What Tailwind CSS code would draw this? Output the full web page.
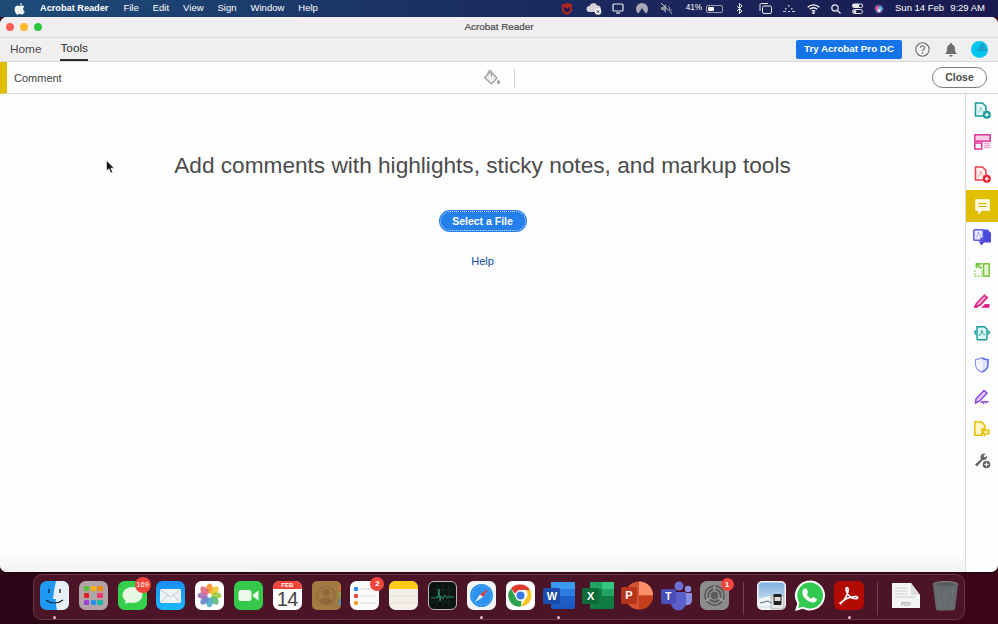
<!DOCTYPE html>
<html lang="en">
<head>
  <meta charset="UTF-8" />
  <title>Acrobat Reader</title>
  <script src="https://cdn.jsdelivr.net/npm/@tailwindcss/browser@4"></script>
</head>
<body class="w-[998px] h-[624px] overflow-hidden bg-gradient-to-r from-[#2c0616] via-[#3f0a1e] to-[#3c0618] font-['Liberation_Sans',sans-serif] flex flex-col">

  <!-- menu bar -->
  <div class="h-[17px] shrink-0 flex items-center text-white text-[9.500px] bg-gradient-to-r from-[#1d4c79] via-[#1a2c62] to-[#1a1a50]">
    <svg class="ml-[14px] w-[11px] h-[12px]" viewBox="0 0 14 16" fill="#f2f2f2"><path d="M10.2 0c.1 1.2-1.100 3-2.900 3C7.200 1.700 8.500.2 10.200 0zM7.300 4c.8 0 1.700-.8 3.100-.8 1.200 0 2.400.6 3.100 1.700-2.500 1.500-2.100 5 .5 6.100-.6 1.700-2.100 4.500-3.600 4.500-1 0-1.500-.7-2.800-.7s-1.900.7-2.900.7C2.700 15.500.5 11.800.5 8.500c0-3.200 2-5.200 4-5.200 1.200 0 2.100.7 2.800.7z"/></svg>
    <span class="ml-[15px] font-bold text-[9.200px]">Acrobat Reader</span>
    <span class="ml-[15px]">File</span>
    <span class="ml-[14px]">Edit</span>
    <span class="ml-[14px]">View</span>
    <span class="ml-[14px]">Sign</span>
    <span class="ml-[14px]">Window</span>
    <span class="ml-[14px]">Help</span>
    <div class="ml-auto flex items-center">
      <svg class="w-[12px] h-[12px]" viewBox="0 0 12 12"><path d="M1 1.500 6 0l5 1.500V7c0 2-3 4-5 5-2-1-5-3-5-5z" fill="#b3261e"/><path d="M3 3.500v4l3 2 3-2v-4L6 6z" fill="#1a1a50"/></svg>
      <svg class="ml-[13px] w-[16px] h-[13px]" viewBox="0 0 16 13"><path d="M3.500 10a3 3 0 0 1 0-6 4 4 0 0 1 7.500-.5A3 3 0 0 1 12 10z" fill="#d5d5d8"/><circle cx="12" cy="9.500" r="3.200" fill="#fff"/><path d="M10.800 8.300l2.400 2.400m0-2.400l-2.400 2.400" stroke="#1a1a50"/></svg>
      <svg class="ml-[10px] w-[12px] h-[11px]" viewBox="0 0 12 11" fill="none" stroke="#e8e8ea" stroke-width="1.200"><rect x="1" y="1" width="10" height="7" rx="1"/><path d="M4 10h4"/></svg>
      <svg class="ml-[12px] w-[12px] h-[11px]" viewBox="0 0 12 11" fill="#a9a9b5"><path d="M6 0a6 6 0 0 1 6 6c0 2-.8 3.500-2 4.500L8.500 9 6 5 3.500 9 2 10.500A6 6 0 0 1 0 6a6 6 0 0 1 6-6z"/></svg>
      <svg class="ml-[12px] w-[13px] h-[11px]" viewBox="0 0 13 11" fill="#8d8d9b"><path d="M1 4h2l3-3v9L3 7H1z"/><path d="M1 0l11 10.500" stroke="#c5c5cc"/><path d="M8 3l2 2-1 1 3 1" stroke="#8d8d9b" fill="none"/></svg>
      <span class="ml-[13px] text-[8.200px]">41%</span>
      <div class="ml-[4px] w-[17px] h-[8px] rounded-[2px] border border-[#a0a0aa] p-[1px]"><div class="w-[6px] h-full bg-white rounded-[1px]"></div></div>
      <svg class="ml-[13px] w-[7px] h-[11px]" viewBox="0 0 7 11" fill="none" stroke="#eee"><path d="M1 3l5 5-2.500 2.500V.500L6 3 1 8"/></svg>
      <svg class="ml-[16px] w-[13px] h-[11px]" viewBox="0 0 13 11" fill="none" stroke="#e8e8ea"><rect x="3.500" y="3" width="9" height="7.500" rx="1.500"/><path d="M1 8V2a1.500 1.500 0 0 1 1.500-1.500H9"/></svg>
      <svg class="ml-[11px] w-[12px] h-[8px]" viewBox="0 0 12 8" fill="#c8c8d0"><rect x="5" y="0" width="1.500" height="1.500"/><rect x="2" y="3" width="1.500" height="1.500"/><rect x="8" y="3" width="1.500" height="1.500"/><rect x="0" y="6" width="3" height="1"/><rect x="5" y="6" width="2" height="1"/><rect x="9" y="6" width="3" height="1"/></svg>
      <svg class="ml-[12px] w-[13px] h-[10px]" viewBox="0 0 13 10" fill="none" stroke="#fff" stroke-width="1.300"><path d="M.700 3.200a8.200 8.200 0 0 1 11.600 0M2.800 5.300a5.200 5.200 0 0 1 7.400 0M4.800 7.300a2.300 2.300 0 0 1 3.400 0"/><circle cx="6.500" cy="9" r=".5" fill="#fff"/></svg>
      <svg class="ml-[11px] w-[10px] h-[10px]" viewBox="0 0 10 10" fill="none" stroke="#eee" stroke-width="1.200"><circle cx="4" cy="4" r="3.200"/><path d="M6.500 6.500 9.500 9.500"/></svg>
      <svg class="ml-[11px] w-[11px] h-[11px]" viewBox="0 0 11 11"><rect x="0" y="0.500" width="11" height="4.500" rx="2.200" fill="#e8e8ea"/><circle cx="8.500" cy="2.700" r="1.500" fill="#1a1a50"/><rect x="0.500" y="6.500" width="10" height="4" rx="2" fill="none" stroke="#e8e8ea"/><circle cx="2.800" cy="8.500" r="1.500" fill="#e8e8ea"/></svg>
      <svg class="ml-[11px] w-[10px] h-[10px]" viewBox="0 0 10 10"><circle cx="5" cy="5" r="4.500" fill="#5a4a9a"/><circle cx="3.500" cy="4" r="2.200" fill="#e05a9a"/><circle cx="6.500" cy="4.500" r="2" fill="#58c0e8"/><circle cx="5" cy="6.500" r="1.800" fill="#e8e8f0"/></svg>
      <span class="ml-[11px]">Sun 14 Feb</span>
      <span class="ml-[6px] mr-[13px]">9:29 AM</span>
    </div>
  </div>

  <!-- window -->
  <div class="h-[555px] shrink-0 rounded-[7px] overflow-hidden flex flex-col bg-[#fdfdfd] shadow-[0_1px_3px_rgba(0,0,0,0.4)]">
    <div class="h-[21px] shrink-0 relative flex items-center bg-[#f0eef0] border-b border-[#dcdcdc]">
      <div class="ml-[5.500px] flex gap-[5.500px]">
        <div class="w-[8.500px] h-[8.500px] rounded-full bg-[#fc5f57]"></div>
        <div class="w-[8.500px] h-[8.500px] rounded-full bg-[#fdbb2d]"></div>
        <div class="w-[8.500px] h-[8.500px] rounded-full bg-[#2ac840]"></div>
      </div>
      <div class="absolute inset-0 flex items-center justify-center text-[9.900px] text-[#4a4a4a] [-webkit-text-stroke:0.2px_#4a4a4a]">Acrobat Reader</div>
    </div>

    <!-- tabs -->
    <div class="h-[24px] shrink-0 flex items-center bg-[#efefef] border-b border-[#d8d8d8] text-[11.800px] text-[#4b4b4b]">
      <span class="ml-[10px]">Home</span>
      <div class="ml-[19px] h-full flex items-center border-b-2 border-[#2c2c2c] text-[#2c2c2c]">Tools</div>
      <div class="ml-auto w-[106px] h-[19px] rounded-[2px] bg-[#1473e6] text-white text-[9.800px] font-bold flex items-center justify-center">Try Acrobat Pro DC</div>
      <svg class="ml-[13px] w-[15px] h-[15px]" viewBox="0 0 15 15" fill="none"><circle cx="7.500" cy="7.500" r="6.700" stroke="#6e6e6e" stroke-width="1.100"/><path d="M5.500 5.800a2 2 0 1 1 3 1.700c-.7.400-1 .8-1 1.500" stroke="#6e6e6e" stroke-width="1.200"/><circle cx="7.500" cy="11" r=".8" fill="#6e6e6e"/></svg>
      <svg class="ml-[15px] w-[12px] h-[14px]" viewBox="0 0 12 14" fill="#6e6e6e"><path d="M6 0c.6 0 1 .4 1 1v.6c2 .5 3 2.200 3 4.400 0 2.500.6 3.700 2 5H0c1.400-1.300 2-2.500 2-5 0-2.200 1-3.900 3-4.400V1c0-.6.4-1 1-1z"/><path d="M4.300 12h3.400a1.700 1.700 0 0 1-3.400 0z"/></svg>
      <svg class="ml-[14px] mr-[10px] w-[17px] h-[17px]" viewBox="0 0 17 17"><circle cx="8.500" cy="8.500" r="8.500" fill="#00c5ee"/><path d="M11.500 1 16.500 10H5z" fill="#18a3cc"/></svg>
    </div>

    <!-- comment bar -->
    <div class="h-[32px] shrink-0 flex items-center bg-[#fdfdfd] border-b border-[#d8d8d8] border-l-[7px] border-l-[#e0bf00]">
      <span class="ml-[7px] mt-[1px] text-[11px] text-[#444]">Comment</span>
      <svg class="ml-[421px] w-[18px] h-[17px]" viewBox="0 0 18 17" fill="none"><path d="M7.500 2.500 14 9l-5.500 6L1.500 8.500z" fill="#eeeeee" stroke="#9a9a9a" stroke-width="1.200"/><path d="M5 6V3a1.700 1.700 0 0 1 3.400 0v4.500" stroke="#9a9a9a"/><path d="M15.500 10.500c1 1.400 1.500 2.100 1.500 2.900a1.500 1.500 0 0 1-3 0c0-.8.500-1.500 1.500-2.900z" fill="#9a9a9a"/></svg>
      <div class="ml-[13px] w-px h-[20px] bg-[#d5d5d5]"></div>
      <div class="ml-auto mr-[11px] w-[55px] h-[21px] rounded-full border border-[#7a7a7a] text-[10.500px] font-bold text-[#4b4b4b] flex items-center justify-center">Close</div>
    </div>

    <!-- content -->
    <div class="flex-1 flex min-h-0">
      <div class="flex-1 relative flex flex-col items-center bg-gradient-to-b from-[#fdfdfd] from-[96%] to-[#f3f3f3]">
        <h1 class="mt-[57px] text-[22.650px] leading-[28px] text-[#4b4b4b]">Add comments with highlights, sticky notes, and markup tools</h1>
        <div class="mt-[31px] w-[88px] h-[22px] rounded-full bg-[#2680eb] p-[1px]">
          <div class="w-full h-full pt-[1px] rounded-full border border-dotted border-white/80 text-white text-[10.500px] font-bold flex items-center justify-center">Select a File</div>
        </div>
        <a class="mt-[22px] text-[11px] leading-[14px] text-[#0d4f9e]">Help</a>
        <!-- mouse pointer -->
        <svg class="absolute left-[106px] top-[66px] w-[9px] h-[14px]" viewBox="0 0 9 14"><path d="M.500.500v10.500l2.500-2.300 1.800 4.300 1.800-.8L4.800 8.200H8z" fill="#111" stroke="#fff" stroke-width=".6"/></svg>
      </div>

      <!-- tool rail -->
      <div class="w-[33px] shrink-0 border-l border-[#dcdcdc] flex flex-col">
        <div class="h-[32px] flex items-center justify-center">
          <svg class="w-[17px] h-[17px]" viewBox="0 0 17 17" fill="none"><path d="M1.500 1h7l3.500 3.500V14H1.500z" stroke="#1a9a9a" stroke-width="1.500" fill="#e4f6f6"/><path d="M4 10.500c2-1 2.800-3.500 2.800-5.500 0 2.500 1 3.700 3 4.500" stroke="#7cc"/><circle cx="12.800" cy="12.800" r="4" fill="#1a9a9a"/><path d="M10.800 12.800h4m-2-2v4" stroke="#fff" stroke-width="1.200"/></svg>
        </div>
        <div class="h-[32px] flex items-center justify-center">
          <svg class="w-[17px] h-[16px]" viewBox="0 0 17 16" fill="none"><rect x=".8" y=".8" width="15.400" height="6.300" stroke="#e0329a" stroke-width="1.500" fill="#fbd0e6"/><rect x=".8" y="9" width="7" height="6" stroke="#e0329a" stroke-width="1.500"/><path d="M10 9.500h6.500M10 11.500h6.500M10 13.500h6.500" stroke="#f4a8d0" stroke-width="1.300"/></svg>
        </div>
        <div class="h-[32px] flex items-center justify-center">
          <svg class="w-[17px] h-[17px]" viewBox="0 0 17 17" fill="none"><path d="M1.500 1h7l3.500 3.500V14H1.500z" stroke="#e8404a" stroke-width="1.500" fill="#fdeeee"/><path d="M4 10.500c2-1 2.800-3.500 2.800-5.500 0 2.500 1 3.700 3 4.500" stroke="#f09a9a"/><circle cx="12.800" cy="12.800" r="4" fill="#e0222e"/><path d="M10.800 12.800h4m-2-2v4" stroke="#fff" stroke-width="1.200"/></svg>
        </div>
        <div class="h-[32px] bg-[#e0bf00] flex items-center justify-center">
          <svg class="w-[15px] h-[15px]" viewBox="0 0 15 15" fill="none"><path d="M1 1h13v10H6l-2 3v-3H1z" fill="#fff8d8" stroke="#fff" stroke-width="1.400"/><path d="M3.500 4.500h8M3.500 7.500h8" stroke="#d8b400" stroke-width="1.200"/></svg>
        </div>
        <div class="h-[31.800px] flex items-center justify-center">
          <svg class="w-[18px] h-[17px]" viewBox="0 0 18 17" fill="none"><path d="M9 .5h5.500L18 4v9.500H9z" fill="#4a4adc"/><rect x=".8" y=".8" width="9.400" height="10.400" rx="1" fill="#e8e8ff" stroke="#5a5ae0" stroke-width="1.500"/><path d="M3 8c1.500-1 2.500-3 2.500-5 0 2 1 3 2.500 4" stroke="#9a9aee" stroke-width=".8"/><path d="M8.500 8.500v4" stroke="#4a4adc" stroke-width="2"/><path d="M5.500 12.500h6l-3 4z" fill="#4a4adc"/></svg>
        </div>
        <div class="h-[31.800px] flex items-center justify-center">
          <svg class="w-[16px] h-[14px]" viewBox="0 0 16 14" fill="none"><rect x="9.500" y=".8" width="5.700" height="12.400" stroke="#78c83c" stroke-width="1.500" fill="#e4f5d0"/><path d="M.8 7v6.200h7V7" stroke="#a5dc78" stroke-width="1.500" stroke-dasharray="2 1"/><path d="M8 .8H2.500v4.500" stroke="#78c83c" stroke-width="1.800"/><path d="M2.500 .8 7.500 5.500" stroke="#78c83c" stroke-width="1.800"/></svg>
        </div>
        <div class="h-[31.800px] flex items-center justify-center">
          <svg class="w-[16px] h-[14px]" viewBox="0 0 16 14" fill="none"><path d="M2.500 9.500 10.500 1.300l2.700 2.300-7.500 7.800-4.500.8z" fill="#f8b8d8" stroke="#e01f85" stroke-width="1.600"/><path d="M7 13.800H15.500V10H11z" fill="#e01f85"/><path d="M0 13h4" stroke="#e01f85" stroke-width="1.600"/></svg>
        </div>
        <div class="h-[31.800px] flex items-center justify-center">
          <svg class="w-[16px] h-[15px]" viewBox="0 0 16 15" fill="none"><path d="M3 .8h7.500L13 3.300V12.800a1 1 0 0 1-1 1H4a1 1 0 0 1-1-1z" stroke="#159a9a" stroke-width="1.400" fill="#dff4f4"/><path d="M5 10c1.500-1 2.800-3 3-5.500 0 2.500 1 3.500 3 4.500" stroke="#159a9a"/><path d="M2 4.500 .5 6.500 2 8.500M14 4.500l1.500 2-1.500 2" stroke="#159a9a" stroke-width="1.300"/></svg>
        </div>
        <div class="h-[31.800px] flex items-center justify-center">
          <svg class="w-[14px] h-[16px]" viewBox="0 0 14 16" fill="none"><path d="M7 1c2 1.200 4 1.700 6 1.800V8c0 3-2.500 5.500-6 7-3.500-1.500-6-4-6-7V2.800C3 2.700 5 2.200 7 1z" fill="#dfe4ff" stroke="#5a66f0" stroke-width="1.500"/><path d="M7 1v14c-3.500-1.500-6-4-6-7V2.800C3 2.700 5 2.200 7 1z" fill="#f4f5ff"/></svg>
        </div>
        <div class="h-[31.800px] flex items-center justify-center">
          <svg class="w-[17px] h-[16px]" viewBox="0 0 17 16" fill="none"><path d="M2 10 10 1.500l3 2.500-7.500 8L1.500 14z" fill="#e6d4fa" stroke="#8a44dd" stroke-width="1.500"/><path d="M7 14c1-2 2-2 2.500-.5.500-1.500 1.500-1.500 2 0 .5-1 1.500-1 3-.5" stroke="#8a44dd" stroke-width="1.400"/></svg>
        </div>
        <div class="h-[31.800px] flex items-center justify-center">
          <svg class="w-[16px] h-[16px]" viewBox="0 0 16 16" fill="none"><path d="M.8 .8h6.500L11 4.500V8H8v6.300H.8z" stroke="#e6c000" stroke-width="1.500" fill="#fff6c8"/><rect x="8.500" y="8.500" width="7" height="5" fill="#e6c000" /><rect x="10" y="10" width="4" height="2" fill="#fff6c8"/><path d="M10 13.500v2.500l2.500-2.500" fill="#e6c000"/></svg>
        </div>
        <div class="h-[31.800px] flex items-center justify-center">
          <svg class="w-[17px] h-[17px]" viewBox="0 0 17 17" fill="none"><path d="M1 12.500 7 7a3.500 3.500 0 0 1 4.500-5L9.500 4l1.500 1.500 2-2A3.500 3.500 0 0 1 8.800 8L3 14.500z" fill="#666"/><circle cx="12.500" cy="12.500" r="3.800" fill="#666"/><path d="M10.500 12.500h4m-2-2v4" stroke="#fff" stroke-width="1.100"/></svg>
        </div>
      </div>
    </div>
  </div>

  <!-- dock -->
  <div class="mt-[2px] mx-[33px] h-[46px] shrink-0 relative flex items-start pt-[6px] pl-[6px] gap-[9.800px] rounded-[9px] border border-white/15 bg-[#4b1427]">

    <div class="relative w-[29px] h-[29px]">
      <svg class="w-full h-full" viewBox="0 0 29 29"><rect width="29" height="29" rx="6.500" fill="#1f9af2"/><path d="M16 0h6.500A6.500 6.500 0 0 1 29 6.500v16a6.500 6.500 0 0 1-6.500 6.500H17c-1-5-1.500-8-1-11h-3c.5-6 1.500-12 3-18z" fill="#e8eff5"/><path d="M9 8v4M20 8v4" stroke="#123" stroke-width="1.300"/><path d="M6 19c5 4 12 4 17 0" stroke="#123" stroke-width="1.200" fill="none"/></svg>
      <div class="absolute left-[13px] top-[35px] w-[3px] h-[3px] rounded-full bg-[#e8b8c8]"></div>
    </div>

    <div class="w-[29px] h-[29px] rounded-[6.500px] bg-[#b3a3a8] p-[5px] grid grid-cols-3 gap-[1.500px]">
      <div class="bg-[#52c234] rounded-[1px]"></div><div class="bg-[#f5b400] rounded-[1px]"></div><div class="bg-[#f08a00] rounded-[1px]"></div>
      <div class="bg-[#e02020] rounded-[1px]"></div><div class="bg-[#a8a8a8] rounded-[1px]"></div><div class="bg-[#ee3a6a] rounded-[1px]"></div>
      <div class="bg-[#9a44d8] rounded-[1px]"></div><div class="bg-[#2a90ee] rounded-[1px]"></div><div class="bg-[#18b8a8] rounded-[1px]"></div>
    </div>

    <div class="relative w-[29px] h-[29px]">
      <svg class="w-full h-full" viewBox="0 0 29 29"><rect width="29" height="29" rx="6.500" fill="#36cf4c"/><ellipse cx="14.500" cy="14" rx="10" ry="8" fill="#e6f7e4"/><path d="M8 19l-1 4 5-2z" fill="#e6f7e4"/></svg>
      <div class="absolute left-[17px] top-[-4px] w-[16px] h-[16px] rounded-full bg-[#f0453a] text-white text-[7.500px] flex items-center justify-center">169</div>
    </div>

    <svg class="w-[29px] h-[29px]" viewBox="0 0 29 29"><defs><linearGradient id="mail" x1="0" y1="0" x2="0" y2="1"><stop offset="0" stop-color="#1a8cf5"/><stop offset="1" stop-color="#1ab8f8"/></linearGradient></defs><rect width="29" height="29" rx="6.500" fill="url(#mail)"/><rect x="4" y="8" width="21" height="14" rx="1" fill="#eef2f6"/><path d="M4 8.500 14.500 16 25 8.500M4 22l8-8M25 22l-8-8" stroke="#aab4c0" fill="none" stroke-width=".7"/></svg>

    <svg class="w-[29px] h-[29px]" viewBox="0 0 29 29"><rect width="29" height="29" rx="6.500" fill="#fff"/><g fill-opacity=".85"><ellipse cx="14.500" cy="7.500" rx="3.300" ry="5" fill="#f58a20"/><ellipse cx="14.500" cy="7.500" rx="3.300" ry="5" fill="#eec21d" transform="rotate(45 14.500 14.500)"/><ellipse cx="14.500" cy="7.500" rx="3.300" ry="5" fill="#9ac83a" transform="rotate(90 14.500 14.500)"/><ellipse cx="14.500" cy="7.500" rx="3.300" ry="5" fill="#50b46c" transform="rotate(135 14.500 14.500)"/><ellipse cx="14.500" cy="7.500" rx="3.300" ry="5" fill="#46a8c8" transform="rotate(180 14.500 14.500)"/><ellipse cx="14.500" cy="7.500" rx="3.300" ry="5" fill="#5c7cc8" transform="rotate(225 14.500 14.500)"/><ellipse cx="14.500" cy="7.500" rx="3.300" ry="5" fill="#a264b0" transform="rotate(270 14.500 14.500)"/><ellipse cx="14.500" cy="7.500" rx="3.300" ry="5" fill="#e2607a" transform="rotate(315 14.500 14.500)"/></g></svg>

    <svg class="w-[29px] h-[29px]" viewBox="0 0 29 29"><rect width="29" height="29" rx="6.500" fill="#34c94a"/><rect x="4.500" y="9" width="13" height="11" rx="2.500" fill="#eef9ec"/><path d="M19 13.500 24.500 9.500v10L19 15.500z" fill="#eef9ec"/></svg>

    <div class="w-[29px] h-[29px] rounded-[6.500px] overflow-hidden bg-white flex flex-col items-center">
      <div class="w-full h-[8px] bg-[#f0453a] text-white text-[6px] font-bold leading-[8px] text-center">FEB</div>
      <div class="text-[#444] text-[20px] leading-[20px] tracking-[-0.5px]">14</div>
    </div>

    <svg class="w-[29px] h-[29px]" viewBox="0 0 29 29"><rect width="29" height="29" rx="5" fill="#a07a42"/><rect x="26.500" y="4" width="2.500" height="6" fill="#c8743c"/><rect x="26.500" y="11" width="2.500" height="6" fill="#8a9a48"/><rect x="26.500" y="18" width="2.500" height="6" fill="#5c88a8"/><circle cx="14" cy="14.500" r="9" fill="none" stroke="#8c683a" stroke-width="1.200"/><circle cx="14" cy="11.500" r="3.300" fill="#8c683a"/><path d="M7.500 20.500c1.500-3 3.500-4 6.500-4s5 1 6.500 4a9 9 0 0 1-13 0z" fill="#8c683a"/></svg>

    <div class="relative w-[29px] h-[29px]">
      <svg class="w-full h-full" viewBox="0 0 29 29"><rect width="29" height="29" rx="6.500" fill="#fbfbfb"/><circle cx="6" cy="8" r="2.200" fill="#2a84ee"/><circle cx="6" cy="15" r="2.200" fill="#e8453c"/><circle cx="6" cy="22" r="2.200" fill="#f59a23"/><path d="M11 8h14M11 15h14M11 22h14" stroke="#d8d8d8"/></svg>
      <div class="absolute left-[20px] top-[-4px] w-[14px] h-[14px] rounded-full bg-[#f0453a] text-white text-[8px] font-bold flex items-center justify-center">2</div>
    </div>

    <svg class="w-[29px] h-[29px]" viewBox="0 0 29 29"><rect width="29" height="29" rx="6.500" fill="#f1efe8"/><path d="M0 8V6.500A6.500 6.500 0 0 1 6.500 0h16A6.500 6.500 0 0 1 29 6.500V8z" fill="#fdcb13"/><path d="M0 15h29M0 22h29" stroke="#dcdad2" stroke-width=".7"/></svg>

    <svg class="w-[29px] h-[29px]" viewBox="0 0 29 29"><rect x=".5" y=".5" width="28" height="28" rx="5.500" fill="#0b1412" stroke="#b8b8b8"/><path d="M3 9h23M3 15h23M3 21h23M9 3v23M15 3v23M21 3v23" stroke="#1c3a34" stroke-width=".5"/><path d="M3 17h5l1-1 1 1 1-9 1 12 1-5 2 3 2-4 2 3 2-1h5" stroke="#35b58e" stroke-width=".7" fill="none"/></svg>

    <div class="relative w-[29px] h-[29px]">
      <svg class="w-full h-full" viewBox="0 0 29 29"><rect width="29" height="29" rx="6.500" fill="#f2f4f6"/><circle cx="14.500" cy="14.500" r="11.500" fill="#2b90ee"/><circle cx="14.500" cy="14.500" r="9.500" fill="none" stroke="#bcdcf8" stroke-width=".6" stroke-dasharray="1 1.200"/><path d="M21 8 13 13.500 16 16z" fill="#ee3a30"/><path d="M8 21 13 13.500 16 16z" fill="#f4f6f8"/></svg>
      <div class="absolute left-[13px] top-[35px] w-[3px] h-[3px] rounded-full bg-[#e8b8c8]"></div>
    </div>

    <svg class="w-[29px] h-[29px]" viewBox="0 0 29 29"><rect width="29" height="29" rx="6.500" fill="#fff"/><path d="M14.500 3.500a11 11 0 0 1 9.500 5.500H14.500a5.500 5.500 0 0 0-5.300 4L5 7.500a11 11 0 0 1 9.500-4z" fill="#e0392e"/><path d="M24 9a11 11 0 0 1-9 16.500l4.600-8a5.500 5.500 0 0 0 0-8.500z" fill="#f8c41b"/><path d="M15 25.500A11 11 0 0 1 5 7.500L9.500 16a5.500 5.500 0 0 0 6 4z" fill="#2ca24c"/><circle cx="14.500" cy="14.500" r="5" fill="#fff"/><circle cx="14.500" cy="14.500" r="4" fill="#3b78e8"/></svg>

    <div class="relative w-[29px] h-[29px]">
      <svg class="w-full h-full overflow-visible" viewBox="0 0 29 29"><rect x="7" y="1" width="24" height="27" rx="1.500" fill="#1c5cc0"/><rect x="7" y="1" width="24" height="7" fill="#3a9af0"/><rect x="7" y="8" width="24" height="7" fill="#2a7ce0"/><rect x="7" y="15" width="24" height="7" fill="#1f5ec8"/><rect x="-1" y="7" width="17" height="16" rx="1.500" fill="#1c4ca8"/></svg>
      <span class="absolute left-[0px] top-[7px] w-[15px] h-[16px] flex items-center justify-center text-white text-[11px] font-bold">W</span>
      <div class="absolute left-[13px] top-[35px] w-[3px] h-[3px] rounded-full bg-[#e8b8c8]"></div>
    </div>

    <div class="relative w-[29px] h-[29px]">
      <svg class="w-full h-full overflow-visible" viewBox="0 0 29 29"><rect x="7" y="1" width="24" height="27" rx="1.500" fill="#107c41"/><rect x="19" y="1" width="12" height="7" fill="#33c481"/><rect x="7" y="1" width="12" height="7" fill="#21a366"/><rect x="19" y="8" width="12" height="7" fill="#21a366"/><rect x="-1" y="7" width="17" height="16" rx="1.500" fill="#0e6b38"/></svg>
      <span class="absolute left-[0px] top-[7px] w-[15px] h-[16px] flex items-center justify-center text-white text-[11px] font-bold">X</span>
    </div>

    <div class="relative w-[29px] h-[29px]">
      <svg class="w-full h-full overflow-visible" viewBox="0 0 29 29"><circle cx="17" cy="14.500" r="14" fill="#d35230"/><path d="M17 .5a14 14 0 0 1 14 14H17z" fill="#ff8f6b"/><path d="M31 14.500a14 14 0 0 1-14 14v-14z" fill="#c43e1c"/><rect x="-1" y="6" width="16" height="17" rx="1.500" fill="#b7351a"/></svg>
      <span class="absolute left-[0px] top-[6px] w-[14px] h-[17px] flex items-center justify-center text-white text-[11px] font-bold">P</span>
    </div>

    <div class="relative w-[29px] h-[29px]">
      <svg class="w-full h-full overflow-visible" viewBox="0 0 29 29"><circle cx="18" cy="5" r="4.500" fill="#6a6fd0"/><circle cx="27" cy="8" r="3.200" fill="#8a8ee0"/><path d="M22 12h9v8a5 5 0 0 1-9 2z" fill="#8a8ee0"/><path d="M10 11h15v11a7 7 0 0 1-15 0z" fill="#5b60c8"/><rect x="0" y="8" width="15" height="15" rx="1.500" fill="#4a4fb8"/></svg>
      <span class="absolute left-[0px] top-[8px] w-[15px] h-[15px] flex items-center justify-center text-white text-[10px] font-bold">T</span>
    </div>

    <div class="relative w-[29px] h-[29px]">
      <svg class="w-full h-full" viewBox="0 0 29 29"><rect width="29" height="29" rx="6.500" fill="#8c8c8c"/><circle cx="14.500" cy="14.500" r="10.500" fill="#5c5c5c"/><circle cx="14.500" cy="14.500" r="8" fill="none" stroke="#a0a0a0" stroke-width="1.200"/><circle cx="14.500" cy="14.500" r="4.500" fill="none" stroke="#a0a0a0" stroke-width="1.200"/><path d="M14.500 10V4.500M10.500 17 5.500 20M18.500 17l5 3" stroke="#a0a0a0" stroke-width="1.500"/></svg>
      <div class="absolute left-[21px] top-[-3px] w-[13px] h-[13px] rounded-full bg-[#f0453a] text-white text-[8px] font-bold flex items-center justify-center">1</div>
    </div>

    <div class="ml-[4.500px] mt-[1px] w-px h-[33px] bg-white/20"></div>

    <svg class="ml-[3px] w-[29px] h-[29px]" viewBox="0 0 29 29"><defs><linearGradient id="sky" x1="0" y1="0" x2="0" y2="1"><stop offset="0" stop-color="#7fb0e0"/><stop offset="1" stop-color="#e0ecf4"/></linearGradient></defs><rect width="29" height="29" rx="5" fill="#f4f4f4"/><rect x="1.500" y="1.500" width="26" height="26" rx="4" fill="url(#sky)"/><path d="M1.500 18 12 15l16 2v8H1.500z" fill="#f2f6f8"/><path d="M3 22l8-2 5 3" stroke="#567" fill="none"/><rect x="14" y="15" width="13" height="13" rx="1.500" fill="#e6e6e6" stroke="#777" stroke-width=".5"/><rect x="16.500" y="13" width="8" height="11" rx="1" fill="#222"/><rect x="17.500" y="16" width="6" height="4" fill="#ddd"/></svg>

    <svg class="w-[32px] h-[32px] -mx-[1.500px] -mt-[1px]" viewBox="0 0 32 32"><path d="M16 .5a15 15 0 0 1 0 30c-2.500 0-5-.7-7-1.800L1 31l2.300-7.500A15 15 0 0 1 16 .5z" fill="#fff"/><path d="M16 2.500a13 13 0 0 1 0 26c-2.500 0-4.700-.7-6.700-1.800L4 28l1.500-5.200A13 13 0 0 1 16 2.500z" fill="#33c84f"/><path d="M11.500 8.500c.8 0 1.200.3 1.500 1l1 2.500c.2.500 0 1-1.200 2.300 1 2 2.300 3.300 4.600 4.400 1.300-1.500 1.700-1.600 2.300-1.300l2.500 1.200c.6.300.7.800.4 1.600-.6 1.600-2.400 2.400-4 2.200-5.500-.8-9.700-5-10.300-9.700-.2-1.700 1-4.200 2.200-4.200z" fill="#fff"/></svg>

    <div class="relative w-[30px] h-[29px]">
      <svg class="w-full h-full" viewBox="0 0 29 29" preserveAspectRatio="none"><rect width="29" height="29" rx="6" fill="#b30b00"/><path d="M6 22c3-1 6-6 7.500-11.500.5-2.500 0-4-1-4s-1.200 2-.2 4.500c1.500 3.300 3.500 5.500 5.700 6.300 2.500.7 5 .6 5-.6 0-1.300-3-1.400-6-.7-3.600.8-7 2.400-9 4.300-1.500 1.500-2.500 2.500-1.500 2.500z" fill="none" stroke="#fff" stroke-width="1.600"/></svg>
      <div class="absolute left-[14px] top-[35px] w-[3px] h-[3px] rounded-full bg-[#e8b8c8]"></div>
    </div>

    <div class="ml-[3.400px] mt-[1px] w-px h-[33px] bg-white/20"></div>

    <svg class="ml-[2.200px] w-[32px] h-[32px] -mr-[1px] -mt-[1px]" viewBox="0 0 32 32"><path d="M2 3h19l9 12v13H2z" fill="#f4f4f4"/><path d="M21 3v12h9z" fill="#dcdcdc"/><path d="M5 8h12M5 11h12M5 14h12M5 17h20" stroke="#cfcfcf" stroke-width="1.200"/><text x="16" y="26" text-anchor="middle" font-size="5" fill="#888" font-family="Liberation Sans">PDF</text></svg>

    <svg class="ml-[1px] w-[27px] h-[32px] -mt-[1px]" viewBox="0 0 28 32"><ellipse cx="14" cy="4" rx="13" ry="3" fill="#5a5a60" stroke="#8a8a90"/><path d="M1 4 4 29c.2 1.500 1 2 2.500 2h15c1.500 0 2.300-.5 2.500-2L27 4c-3 2-23 2-26 0z" fill="#66696e"/><path d="M6 7l2 22M14 8v22M22 7l-2 22" stroke="#74777c" stroke-width=".6"/></svg>
  </div>
</body>
</html>
